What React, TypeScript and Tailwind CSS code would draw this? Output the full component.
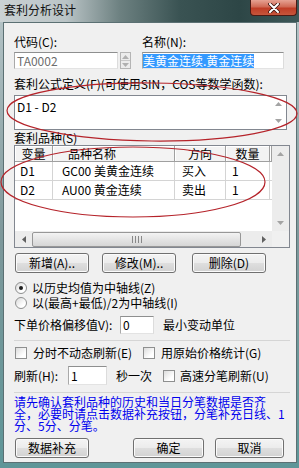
import type { ReactNode } from 'react';

type Dir = 'up' | 'down' | 'left' | 'right';

// small scrollbar / spin triangles
function Arrow({ dir, color = '#a3a3a3' }: { dir: Dir; color?: string }) {
  const vertical = dir === 'up' || dir === 'down';
  const pts = {
    up: '0,4 3.5,0 7,4',
    down: '0,0 3.5,4 7,0',
    left: '4,0 0,3.5 4,7',
    right: '0,0 4,3.5 0,7',
  }[dir];
  return (
    <svg width={vertical ? 7 : 4} height={vertical ? 4 : 7} viewBox={vertical ? '0 0 7 4' : '0 0 4 7'}>
      <polygon points={pts} fill={color} />
    </svg>
  );
}

function Button({ children, className = '' }: { children: ReactNode; className?: string }) {
  return (
    <div
      className={`flex h-[20px] items-center justify-center rounded-[3px] border border-[#707070] bg-[linear-gradient(180deg,#f4f4f4_0%,#ececec_48%,#dedede_52%,#d2d2d2_100%)] shadow-[inset_0_0_0_1px_#fbfbfb] ${className}`}
    >
      {children}
    </div>
  );
}

function Checkbox() {
  return <span className="h-[12px] w-[12px] shrink-0 border border-[#8e8f8f] bg-[linear-gradient(135deg,#dcdcdc_0%,#ffffff_70%)]" />;
}

function Radio({ checked }: { checked?: boolean }) {
  return (
    <span className="flex h-[12px] w-[12px] shrink-0 items-center justify-center rounded-full border border-[#8e8f8f] bg-[linear-gradient(135deg,#dadada_0%,#ffffff_70%)]">
      {checked && <span className="h-[4px] w-[4px] rounded-full bg-[#1e1e1e]" />}
    </span>
  );
}

function Field({ children, className = '' }: { children?: ReactNode; className?: string }) {
  return (
    <div
      className={`flex items-center border border-t-[#8e8f8f] border-l-[#a9a9a9] border-r-[#dcdcdc] border-b-[#e3e3e3] bg-white pl-[2px] ${className}`}
    >
      {children}
    </div>
  );
}

const headCell =
  'flex h-[16px] items-center border-r border-b border-r-[#a0a0a0] border-b-[#a0a0a0] bg-[#f3f3f3] shadow-[inset_1px_1px_0_#ffffff]';
const rowCell = 'flex h-[18px] items-center border-r border-[#d4d4d4]';

const rows = [
  { v: 'D1', name: 'GC00 美黄金连续', dir: '买入', qty: '1' },
  { v: 'D2', name: 'AU00 黄金连续', dir: '卖出', qty: '1' },
];

export default function App() {
  return (
    <div className="relative h-[468px] w-[299px] overflow-hidden bg-[linear-gradient(180deg,#b8c6c9_0%,#7e989b_50%,#5e9698_100%)] font-['Noto_Sans_CJK_SC',sans-serif] text-[12px] leading-[12px] text-black">
      {/* title bar */}
      <div className="flex h-[22px] items-start bg-[linear-gradient(90deg,#cbd2d4_0%,#bac4c6_22%,#6d8181_40%,#3a5353_60%,#2d4646_80%,#3d5858_100%)]">
        <div className="pl-[4px] pt-[4px] text-[#111]">套利分析设计</div>
        <div className="ml-auto mr-[2px] flex h-[16px] w-[47px] items-center justify-center rounded-b-[4px] border border-t-0 border-[#4b1a14] bg-[linear-gradient(180deg,#e6a293_0%,#d06a55_45%,#c03d26_55%,#c6563c_100%)]">
          <svg width="12" height="10" viewBox="0 0 12 10">
            <path d="M2 1 L10 9 M10 1 L2 9" stroke="#3a1410" strokeWidth="3.6" strokeLinecap="round" />
            <path d="M2 1 L10 9 M10 1 L2 9" stroke="#ffffff" strokeWidth="2" strokeLinecap="round" />
          </svg>
        </div>
      </div>

      {/* client area */}
      <div className="ml-[3px] flex h-[441px] w-[294px] flex-col border border-[#5b7073] bg-[#f0f0f0] pl-[10px]">
        <div className="mt-[13px] flex">
          <div className="w-[128px]">代码(C):</div>
          <div>名称(N):</div>
        </div>

        <div className="mt-[4px] flex h-[17px]">
          <Field className="w-[104px] bg-[#f4f4f4] text-[#6d6d6d]">TA0002</Field>
          <div className="ml-[2px] flex w-[11px] flex-col border border-[#b5b5b5] bg-[#ececec]">
            <div className="flex flex-1 items-center justify-center border-b border-[#c8c8c8]">
              <Arrow dir="up" color="#b0b0b0" />
            </div>
            <div className="flex flex-1 items-center justify-center">
              <Arrow dir="down" color="#b0b0b0" />
            </div>
          </div>
          <Field className="ml-[11px] w-[142px] !pl-0">
            <span className="bg-[#3399ff] py-px text-white">美黄金连续.黄金连续</span>
          </Field>
        </div>

        <div className="mt-[9px] whitespace-nowrap">套利公式定义(F)(可使用SIN，COS等数学函数):</div>

        <div className="mt-[5px] flex h-[35px] w-[273px] border border-[#828790] bg-white">
          <div className="flex-1 pl-[2px] pt-[5px]">D1 - D2</div>
          <div className="flex w-[16px] flex-col">
            <div className="flex flex-1 items-center justify-center">
              <Arrow dir="up" />
            </div>
            <div className="flex flex-1 items-center justify-center">
              <Arrow dir="down" />
            </div>
          </div>
        </div>

        <div className="mt-[2px]">套利品种(S)</div>

        {/* list */}
        <div className="mt-[1px] flex h-[103px] w-[276px] border border-[#828790] bg-white">
          <div className="flex w-[257px] flex-col">
            <div className="flex">
              <div className={`${headCell} w-[38px] justify-center`}>变量</div>
              <div className={`${headCell} w-[122px] pl-[15px]`}>品种名称</div>
              <div className={`${headCell} w-[51px] justify-center`}>方向</div>
              <div className={`${headCell} w-[44px] justify-center`}>数量</div>
              <div className={`${headCell} w-[2px]`} />
            </div>
            <div className="flex-1">
              {rows.map((r) => (
                <div key={r.v} className="flex border-b border-[#d4d4d4]">
                  <div className={`${rowCell} w-[38px] pl-[5px]`}>{r.v}</div>
                  <div className={`${rowCell} w-[122px] pl-[9px]`}>{r.name}</div>
                  <div className={`${rowCell} w-[51px] pl-[7px]`}>{r.dir}</div>
                  <div className={`${rowCell} w-[44px] pl-[6px]`}>{r.qty}</div>
                </div>
              ))}
            </div>
            {/* horizontal scrollbar */}
            <div className="flex h-[16px] items-center bg-[#ececec]">
              <div className="flex w-[17px] justify-center">
                <Arrow dir="left" color="#606060" />
              </div>
              <div className="flex h-[15px] w-[209px] items-center justify-center gap-[2px] rounded-[2px] border border-[#979797] bg-[linear-gradient(180deg,#f3f3f3_0%,#e4e4e4_50%,#d6d6d6_100%)]">
                <span className="h-[7px] w-px bg-[#888]" />
                <span className="h-[7px] w-px bg-[#888]" />
                <span className="h-[7px] w-px bg-[#888]" />
                <span className="h-[7px] w-px bg-[#888]" />
              </div>
              <div className="w-[14px]" />
              <div className="flex w-[17px] justify-center">
                <Arrow dir="right" color="#606060" />
              </div>
            </div>
          </div>
          <div className="flex w-[17px] flex-col bg-[#ececec]">
            <div className="flex h-[16px] items-center justify-center">
              <Arrow dir="up" />
            </div>
            <div className="flex-1" />
            <div className="flex h-[17px] items-center justify-center">
              <Arrow dir="down" />
            </div>
            <div className="h-[16px] bg-[#f0f0f0]" />
          </div>
        </div>

        <div className="mt-[5px] flex">
          <Button className="ml-px w-[74px]">新增(A)..</Button>
          <Button className="ml-[13px] w-[74px]">修改(M)..</Button>
          <Button className="ml-[16px] w-[74px]">删除(D)</Button>
        </div>

        <div className="mt-[8px] flex h-[13px] items-center gap-[5px] pl-[1px]">
          <Radio checked />
          <span>以历史均值为中轴线(Z)</span>
        </div>
        <div className="mt-[2px] flex h-[13px] items-center gap-[5px] pl-[1px]">
          <Radio />
          <span>以(最高+最低)/2为中轴线(I)</span>
        </div>

        <div className="mt-[7px] flex h-[18px] items-center">
          <div className="w-[106px] whitespace-nowrap">下单价格偏移值V):</div>
          <Field className="h-[18px] w-[34px]">0</Field>
          <div className="ml-[9px]">最小变动单位</div>
        </div>

        <div className="mt-[6px] mr-[6px] h-px bg-[#d5d5d5]" />

        <div className="mt-[6px] flex h-[12px] items-center">
          <div className="flex w-[129px] items-center gap-[6px] pl-[1px]">
            <Checkbox />
            <span>分时不动态刷新(E)</span>
          </div>
          <div className="flex items-center gap-[6px]">
            <Checkbox />
            <span>用原始价格统计(G)</span>
          </div>
        </div>

        <div className="mt-[7px] flex h-[19px] items-center">
          <div className="w-[54px]">刷新(H):</div>
          <Field className="h-[19px] w-[39px]">1</Field>
          <div className="ml-[9px]">秒一次</div>
          <div className="ml-[11px] flex items-center gap-[5px]">
            <Checkbox />
            <span>高速分笔刷新(U)</span>
          </div>
        </div>

        <div className="mt-[7px] mr-[6px] h-px bg-[#d5d5d5]" />

        <div className="mt-[3px] whitespace-nowrap text-[#0000ee]">
          <div>请先确认套利品种的历史和当日分笔数据是否齐</div>
          <div>全，必要时请点击数据补充按钮，分笔补充日线、1</div>
          <div>分、5分、分笔。</div>
        </div>

        <div className="mt-[6px] flex">
          <Button className="ml-px w-[74px]">数据补充</Button>
          <Button className="ml-[44px] w-[71px] border-[#3c3c3c]">确定</Button>
          <Button className="ml-[11px] w-[69px]">取消</Button>
        </div>
      </div>

      {/* hand-drawn red marks */}
      <svg className="pointer-events-none absolute left-0 top-0" width="299" height="468" viewBox="0 0 299 468">
        <ellipse
          cx="152"
          cy="112"
          rx="145"
          ry="29"
          fill="none"
          stroke="#b5232a"
          strokeWidth="1.2"
          transform="rotate(0.6 152 112)"
        />
        <ellipse cx="133" cy="182" rx="132" ry="35" fill="none" stroke="#b5232a" strokeWidth="1.2" />
      </svg>
    </div>
  );
}
